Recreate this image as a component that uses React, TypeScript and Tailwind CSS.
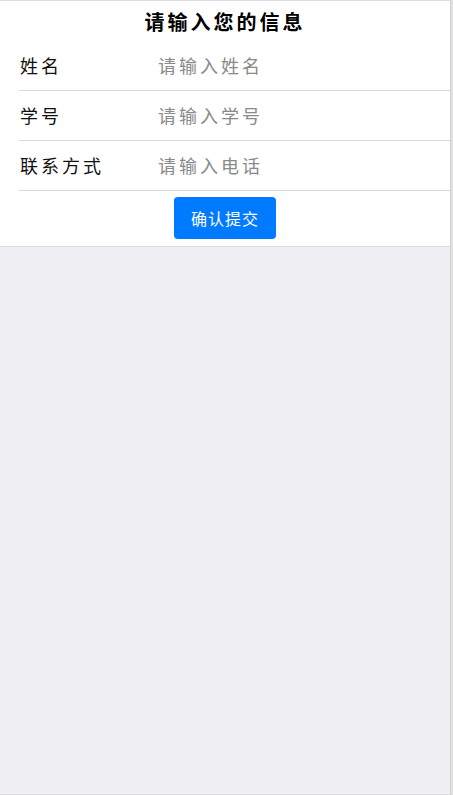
import React, { useState } from 'react';

const fields = [
    { key: 'name', label: '姓名', placeholder: '请输入姓名' },
    { key: 'id', label: '学号', placeholder: '请输入学号' },
    { key: 'phone', label: '联系方式', placeholder: '请输入电话' },
];

export default function App() {
    const [values, setValues] = useState<Record<string, string>>({});

    return (
        <div
            className="flex h-[795px] w-full border-t border-b border-[#dcdcdc] bg-[#efeff4]"
            style={{ fontFamily: '"Noto Sans CJK SC", sans-serif' }}
        >
            <div className="flex-1">
                <form
                    className="bg-white border-b border-[#dcdcdc]"
                    onSubmit={(e) => e.preventDefault()}
                >
                    <h1 className="h-[40px] pt-[7px] text-center text-[20px] font-bold leading-[28px] tracking-[3px] text-black">
                        请输入您的信息
                    </h1>
                    {fields.map((f) => (
                        <div
                            key={f.key}
                            className="ml-[19px] flex h-[50px] items-center border-b border-[#d8d8d8]"
                        >
                            <label
                                htmlFor={f.key}
                                className="w-[139px] pl-[1px] text-[18px] tracking-[3px] text-[#111]"
                            >
                                {f.label}
                            </label>
                            <input
                                id={f.key}
                                type="text"
                                value={values[f.key] || ''}
                                onChange={(e) => setValues({ ...values, [f.key]: e.target.value })}
                                placeholder={f.placeholder}
                                className="flex-1 bg-transparent text-[18px] tracking-[3px] outline-none placeholder:text-[#8a8a8a]"
                            />
                        </div>
                    ))}
                    <div className="flex h-[55px] items-start justify-center pt-[6px]">
                        <button
                            type="submit"
                            className="h-[42px] w-[102px] rounded-[4px] bg-[#007aff] text-[16px] tracking-[1px] text-white"
                        >
                            确认提交
                        </button>
                    </div>
                </form>
            </div>
            <div className="w-[3px] border-l border-[#cfcfcf] bg-[#e2e2e2]" />
        </div>
    );
}
